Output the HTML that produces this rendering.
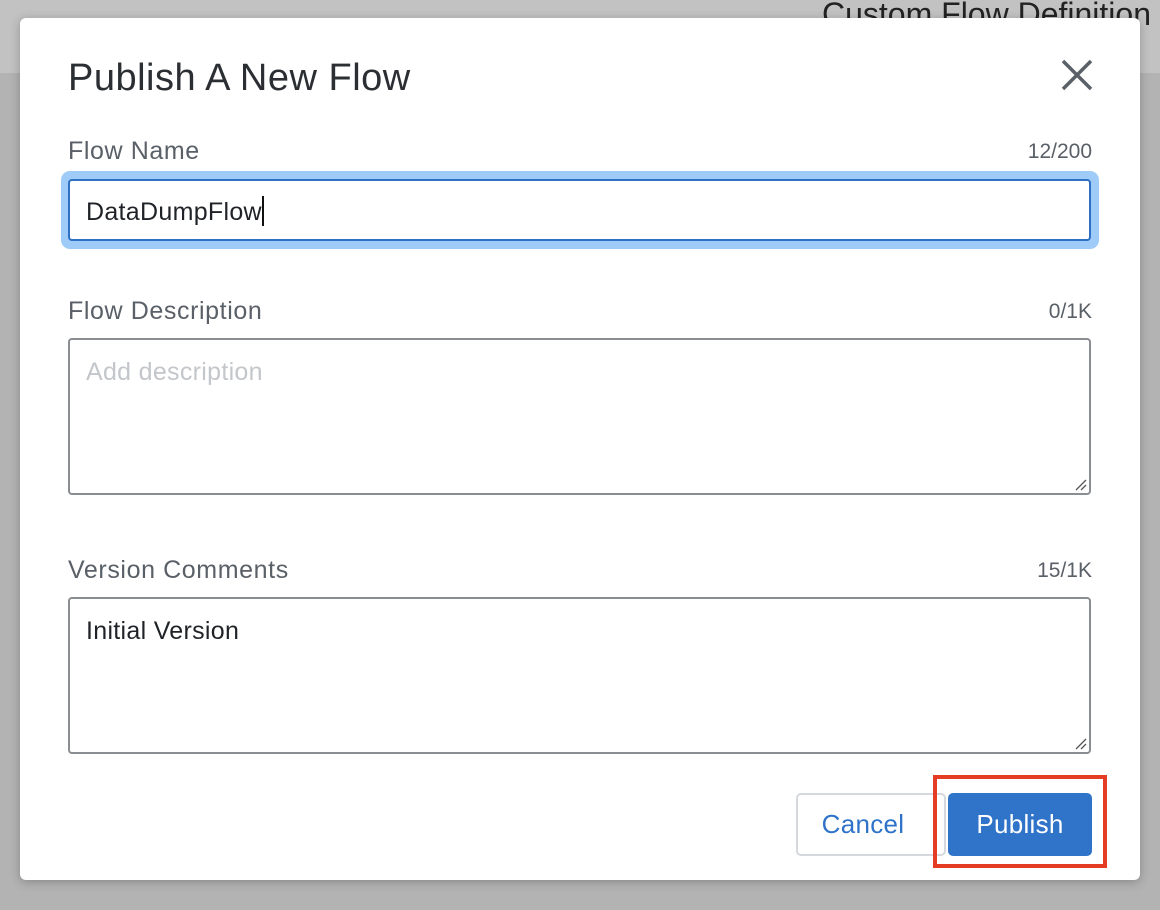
<!DOCTYPE html>
<html><head><meta charset="utf-8"><style>
*{box-sizing:border-box;margin:0;padding:0}
body{width:1160px;height:910px;overflow:hidden;background:#b3b3b3;font-family:"Liberation Sans",sans-serif;position:relative}
.top{position:absolute;left:0;top:0;width:1160px;height:73px;background:#c2c2c2}
.bg{position:absolute;left:822px;top:-4px;font-size:32px;color:#222}
.modal{position:absolute;left:20px;top:18px;width:1120px;height:862px;background:#fff;border-radius:6px;box-shadow:0 2px 10px rgba(0,0,0,.25)}
.t{position:absolute;left:48px;top:39px;font-size:38px;color:#2b2f33;letter-spacing:0.5px}
.lab{position:absolute;left:48px;font-size:25px;color:#5a6068;letter-spacing:0.6px}
.cnt{position:absolute;right:48px;font-size:21px;color:#5a6068}
.box{position:absolute;left:48px;width:1023px;border:2px solid #8a8d91;border-radius:4px;font-size:25px;color:#1f2328;padding:18px 16px;letter-spacing:0.3px}
.grip{position:absolute;right:2px;bottom:2px}
.btn{position:absolute;top:775px;height:63px;border-radius:5px;font-size:26px;display:flex;align-items:center;justify-content:center;letter-spacing:0.3px}
</style></head><body>
<div class="top"></div><div class="bg">Custom Flow Definition</div>
<div class="modal">
<div class="t">Publish A New Flow</div>
<svg style="position:absolute;left:1040px;top:40px" width="34" height="34" viewBox="0 0 34 34"><path d="M3 3L31 31M31 3L3 31" stroke="#5a6068" stroke-width="3.5"/></svg>
<div class="lab" style="top:119px">Flow Name</div><div class="cnt" style="top:122px">12/200</div>
<div style="position:absolute;left:41px;top:153px;width:1038px;height:78px;border-radius:9px;background:#9ecbf7"></div>
<div class="box" style="top:161px;height:62px;border-color:#2f6fc4;background:#fff;padding:15px 16px">DataDumpFlow<span style="display:inline-block;width:2px;height:30px;background:#111;vertical-align:-6px"></span></div>
<div class="lab" style="top:279px">Flow Description</div><div class="cnt" style="top:282px">0/1K</div>
<div class="box" style="top:320px;height:157px;color:#c3c6ca">Add description<svg class="grip" width="14" height="14"><path d="M3 13L13 3M8 13L13 8" stroke="#555" stroke-width="1.3"/></svg></div>
<div class="lab" style="top:538px">Version Comments</div><div class="cnt" style="top:541px">15/1K</div>
<div class="box" style="top:579px;height:157px">Initial Version<svg class="grip" width="14" height="14"><path d="M3 13L13 3M8 13L13 8" stroke="#555" stroke-width="1.3"/></svg></div>
<div class="btn" style="left:776px;width:150px;border:2px solid #d5d8dc;color:#2f73c8;padding-right:16px">Cancel</div>
<div style="position:absolute;left:913px;top:757px;width:174px;height:93px;border:4px solid #e53c26"></div>
<div class="btn" style="left:928px;width:144px;background:#3074c9;color:#fff">Publish</div>
</div>
</body></html>
